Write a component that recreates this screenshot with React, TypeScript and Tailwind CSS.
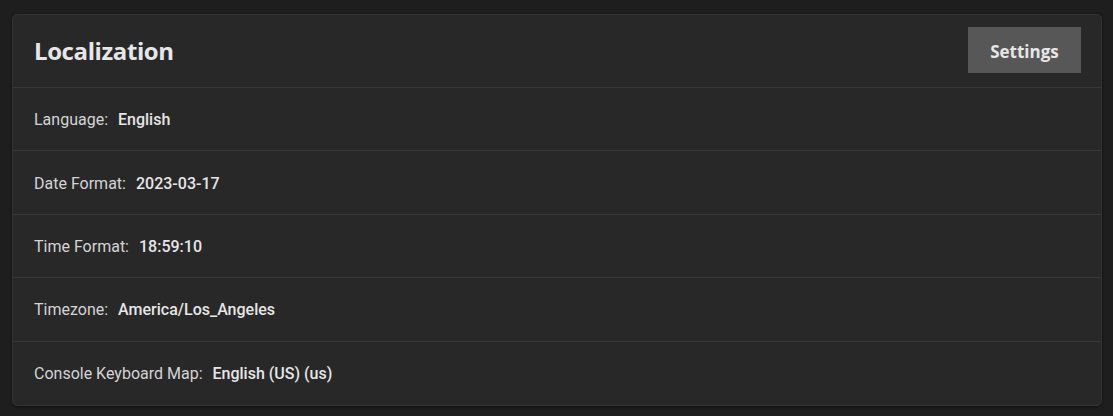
import React from "react";

const rows: { label: string; value: string }[] = [
	{ label: "Language:", value: "English" },
	{ label: "Date Format:", value: "2023-03-17" },
	{ label: "Time Format:", value: "18:59:10" },
	{ label: "Timezone:", value: "America/Los_Angeles" },
	{ label: "Console Keyboard Map:", value: "English (US) (us)" },
];

export default function App() {
	return (
		<div className="w-[1113px] h-[416px] bg-[#1e1e1e] pt-[14px] pl-[12px] font-['Roboto',sans-serif]">
			<div className="w-[1090px] h-[392px] bg-[#282828] border border-[#333333] rounded-[5px] shadow-[0_1px_3px_rgba(0,0,0,0.5)] flex flex-col">
				<div className="h-[73px] flex items-center justify-between pl-[21px] pr-[20px] border-b border-[#393939]">
					<h1 className="text-[24px] font-bold text-[#e6e6e6] tracking-[-0.4px] font-['Open_Sans',sans-serif] leading-none">Localization</h1>
					<button className="w-[113px] h-[46px] -mt-[1px] pt-[2px] bg-[#575757] text-[#e6e6e6] text-[17px] font-bold font-['Open_Sans',sans-serif]">Settings</button>
				</div>
				{rows.map((r, i) => (
					<div
						key={r.label}
						className={`h-[63.5px] flex items-center pl-[21px] pt-[2px] text-[16px] ${i < rows.length - 1 ? "border-b border-[#393939]" : ""}`}
					>
						<span className="text-[#d4d4d4]">{r.label}</span>
						<span className="ml-[10px] font-medium text-[#e6e6e6]">{r.value}</span>
					</div>
				))}
			</div>
		</div>
	);
}
